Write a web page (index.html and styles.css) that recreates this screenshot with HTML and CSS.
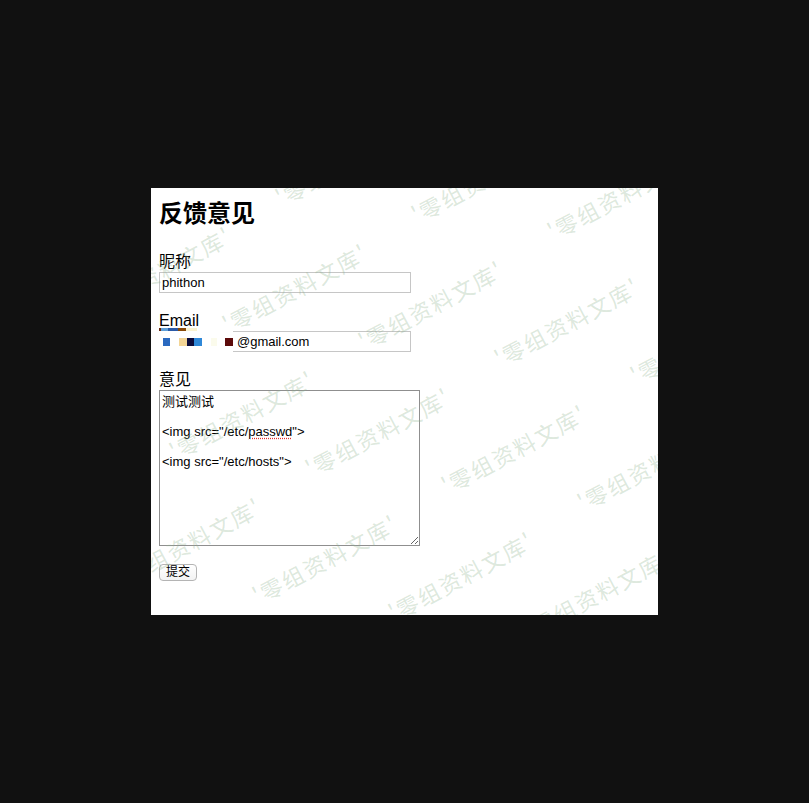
FILE: index.html
```html
<!DOCTYPE html>
<html lang="zh">
<head>
<meta charset="utf-8">
<title>反馈意见</title>
<link rel="stylesheet" href="styles.css">
</head>
<body>
<div class="page">
  <h1 class="title">反馈意见</h1>
  <div class="field">
    <div class="label">昵称</div>
    <div class="input">phithon</div>
  </div>
  <div class="field">
    <div class="label email-label">Email<span class="strip"><i class="s1"></i><i class="s2"></i><i class="s3"></i><i class="s4"></i><i class="s5"></i></span></div>
    <div class="email-row">
      <div class="redact"><i class="b b1"></i><i class="b b2"></i><i class="b b3"></i><i class="b b4"></i><i class="b b5"></i><i class="b b6"></i></div>
      <div class="input input-email">@gmail.com</div>
    </div>
  </div>
  <div class="field">
    <div class="label">意见</div>
    <div class="textarea">测试测试

&lt;img src="/etc/<span class="spell">passwd</span>"&gt;

&lt;img src="/etc/hosts"&gt;</div>
  </div>
  <button class="submit" type="button">提交</button>

  <div class="wm" aria-hidden="true">
    <span style="left:197px;top:-27px">'零组资料文库'</span>
    <span style="left:333px;top:-10px">'零组资料文库'</span>
    <span style="left:469px;top:7px">'零组资料文库'</span>
    <span style="left:605px;top:24px">'零组资料文库'</span>
    <span style="left:8px;top:83px">'零组资料文库'</span>
    <span style="left:144px;top:100px">'零组资料文库'</span>
    <span style="left:280px;top:117px">'零组资料文库'</span>
    <span style="left:416px;top:134px">'零组资料文库'</span>
    <span style="left:552px;top:151px">'零组资料文库'</span>
    <span style="left:91px;top:227px">'零组资料文库'</span>
    <span style="left:227px;top:244px">'零组资料文库'</span>
    <span style="left:363px;top:261px">'零组资料文库'</span>
    <span style="left:499px;top:278px">'零组资料文库'</span>
    <span style="left:635px;top:295px">'零组资料文库'</span>
    <span style="left:38px;top:354px">'零组资料文库'</span>
    <span style="left:174px;top:371px">'零组资料文库'</span>
    <span style="left:310px;top:388px">'零组资料文库'</span>
    <span style="left:446px;top:405px">'零组资料文库'</span>
    <span style="left:582px;top:422px">'零组资料文库'</span>
  </div>
</div>
</body>
</html>
```
FILE: styles.css
```css
html, body {
  margin: 0;
  padding: 0;
  background: #111111;
}
body {
  font-family: "Liberation Sans", "Noto Sans CJK SC", sans-serif;
  color: #000;
}
.page {
  position: relative;
  width: 507px;
  height: 427px;
  margin: 188px 0 0 151px;
  padding: 11px 8px 0;
  box-sizing: border-box;
  background: #fff;
  overflow: hidden;
}
.title {
  margin: 0 0 23px;
  font-size: 24px;
  line-height: 30px;
  font-weight: bold;
}
.field {
  margin-bottom: 18px;
}
.label {
  font-size: 16px;
  line-height: 20px;
}
.email-label {
  position: relative;
}
.strip {
  position: absolute;
  left: 0;
  top: 17px;
  display: flex;
  height: 3px;
}
.strip i { display: block; height: 3px; }
.s1 { width: 2px; background: #6a2a10; }
.s2 { width: 7px; background: #5f9fd8; }
.s3 { width: 10px; background: #2a5aa8; }
.s4 { width: 8px; background: #8a4a08; }
.s5 { width: 11px; background: #fbf3d0; }
.input {
  width: 252px;
  height: 21px;
  box-sizing: border-box;
  border: 1px solid #c6c6c6;
  padding: 0 2px;
  font-size: 13px;
  line-height: 19px;
  background: #fff;
}
.email-row {
  display: flex;
  align-items: flex-start;
}
.redact {
  position: relative;
  z-index: 1;
  width: 74px;
  height: 21px;
  display: flex;
  align-items: flex-start;
  padding-top: 7px;
  box-sizing: border-box;
  background: #fff;
}
.b { display: block; height: 8px; width: 8px; }
.b1 { margin-left: 4px; background: #2a69c0; }
.b2 { margin-left: 9px; background: #f3d596; }
.b3 { background: #0b0b3b; }
.b4 { background: #2f88d8; }
.b5 { margin-left: 9px; width: 7px; background: #fbfbec; }
.b6 { margin-left: 8px; background: #5c0a0a; }
.input-email {
  width: 178px;
  border-left: none;
  padding-left: 4px;
}
.textarea {
  width: 261px;
  height: 156px;
  box-sizing: border-box;
  border: 1px solid #8f8f8f;
  padding: 3px 2px;
  font-size: 13px;
  line-height: 15px;
  white-space: pre-wrap;
  resize: both;
  overflow: auto;
  background: #fff;
}
.spell {
  text-decoration: underline dotted #e03030;
  text-underline-offset: 2px;
}
.field:last-of-type {
  margin-bottom: 17px;
}
.submit {
  display: block;
  width: 38px;
  height: 17px;
  margin: 0;
  padding: 0;
  border: 1px solid #b4b4b4;
  border-radius: 4px;
  background: linear-gradient(#ffffff, #f3f3f3);
  font-family: "Liberation Sans", "Noto Sans CJK SC", sans-serif;
  font-size: 12px;
  line-height: 15px;
  color: #000;
}
.wm {
  position: absolute;
  inset: 0;
  pointer-events: none;
  z-index: 5;
}
.wm span {
  position: absolute;
  white-space: nowrap;
  font-family: "Noto Sans CJK SC", sans-serif;
  font-size: 22px;
  letter-spacing: 2px;
  line-height: 1;
  color: rgba(140, 178, 140, 0.3);
  transform: translate(-50%, -50%) rotate(-28deg);
}
```
